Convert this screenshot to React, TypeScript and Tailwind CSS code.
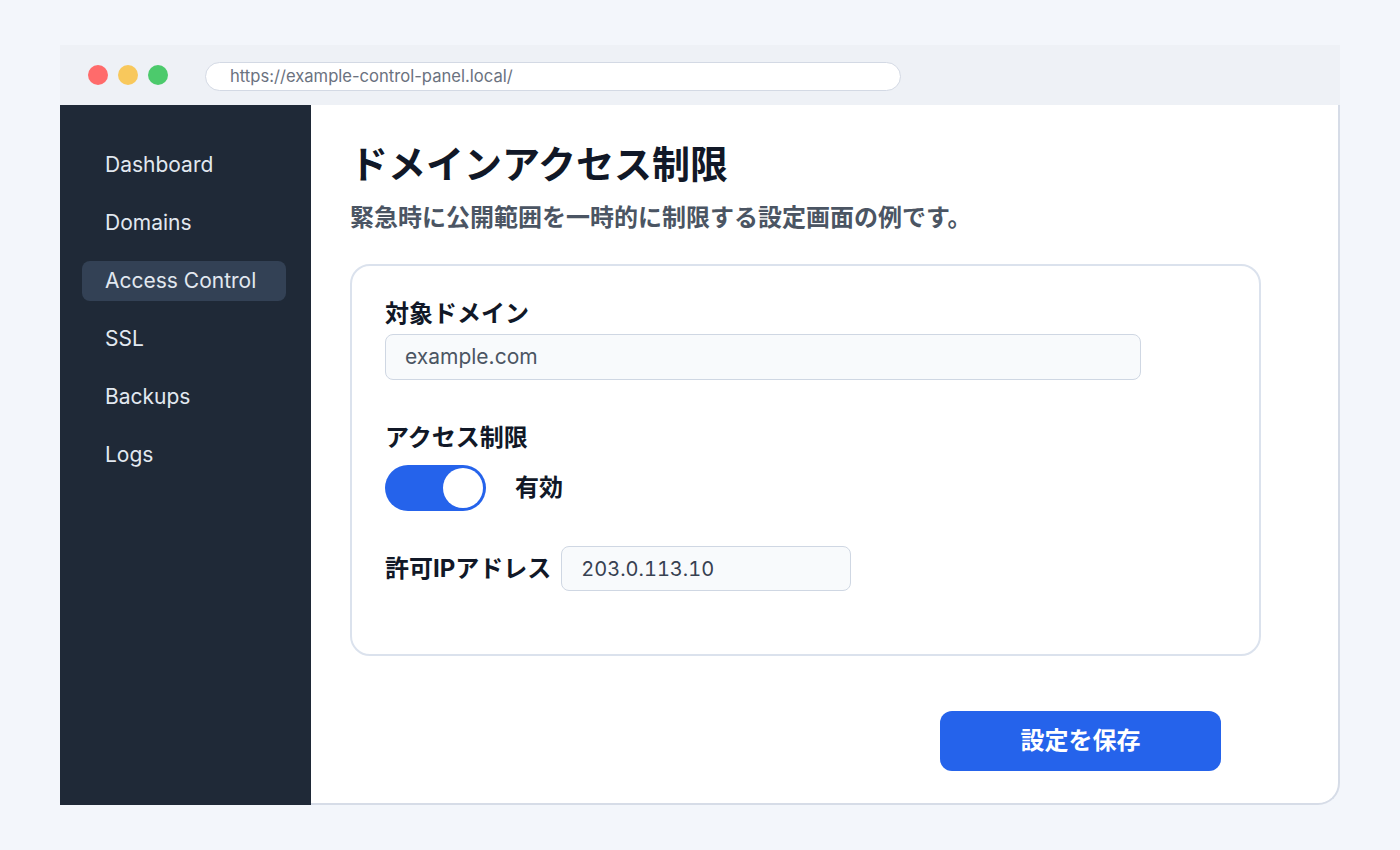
import { useState } from 'react';

const navItems = ['Dashboard', 'Domains', 'Access Control', 'SSL', 'Backups', 'Logs'];

function App() {
  const [enabled, setEnabled] = useState(true);

  return (
    <div
      className="min-h-screen w-full bg-[#f3f6fb] pt-[45px] pl-[60px]"
      style={{ fontFamily: 'Inter, "Noto Sans CJK JP", sans-serif' }}
    >
      <div className="flex h-[760px] w-[1280px] flex-col">
        {/* browser chrome */}
        <div className="flex h-[60px] shrink-0 items-center bg-[#eef1f6] pl-[28px]">
          <div className="flex gap-[10px]">
            <span className="h-[20px] w-[20px] rounded-full bg-[#ff6b6b]" />
            <span className="h-[20px] w-[20px] rounded-full bg-[#f8c85c]" />
            <span className="h-[20px] w-[20px] rounded-full bg-[#4cca6c]" />
          </div>
          <div className="mt-[2px] ml-[37px] flex h-[29px] w-[696px] items-center rounded-full border border-[#d3d9e4] bg-white pl-[24px] text-[16.6px] text-[#6b7280]">
            https://example-control-panel.local/
          </div>
        </div>

        <div className="flex flex-1">
          {/* sidebar */}
          <nav className="flex w-[251px] shrink-0 flex-col gap-[18px] bg-[#1f2937] pt-[40px] pr-[25px] pl-[22px]">
            {navItems.map((item) => (
              <div
                key={item}
                className={
                  'flex h-[40px] items-center rounded-[8px] pl-[23px] text-[21px] text-[#e2e8f0] ' +
                  (item === 'Access Control' ? 'bg-[#334155]' : '')
                }
              >
                {item}
              </div>
            ))}
          </nav>

          {/* main */}
          <main className="flex flex-1 flex-col rounded-br-[22px] border-r-2 border-b-2 border-[#d6dce7] bg-white pt-[31px] pl-[39px]">
            <h1 className="text-[38px] leading-[56px] font-bold text-[#111827]">ドメインアクセス制限</h1>
            <p className="mt-[10px] text-[24px] leading-[32px] font-semibold text-[#4b5563]">
              緊急時に公開範囲を一時的に制限する設定画面の例です。
            </p>

            <div className="mt-[30px] h-[392px] w-[911px] rounded-[20px] border-2 border-[#dbe2ed] px-[33px] pt-[33px]">
              <label className="block text-[24px] leading-[30px] font-bold text-[#111827]">対象ドメイン</label>
              <div className="mt-[5px] flex h-[46px] w-[756px] items-center rounded-[8px] border border-[#cfd7e3] bg-[#f8fafc] pl-[19px] text-[21px] text-[#4b5563]">
                example.com
              </div>

              <label className="mt-[43px] block text-[24px] leading-[30px] font-bold text-[#111827]">アクセス制限</label>
              <div className="mt-[12px] flex items-center">
                <button
                  type="button"
                  onClick={() => setEnabled(!enabled)}
                  className={
                    'flex h-[46px] w-[101px] items-center rounded-full p-[3px] ' +
                    (enabled ? 'justify-end bg-[#2563eb]' : 'justify-start bg-[#cbd5e1]')
                  }
                >
                  <span className="h-[40px] w-[40px] rounded-full bg-white" />
                </button>
                <span className="ml-[29px] text-[24px] font-semibold text-[#111827]">{enabled ? '有効' : '無効'}</span>
              </div>

              <div className="mt-[35px] flex items-center">
                <label className="text-[24px] font-bold text-[#111827]">許可IPアドレス</label>
                <div className="ml-[10px] flex h-[45px] w-[290px] items-center rounded-[8px] border border-[#cfd7e3] bg-[#f8fafc] pl-[19px] text-[20px] text-[#374151] tabular-nums">
                  203.0.113.10
                </div>
              </div>
            </div>

            <div className="mt-[55px] flex w-[871px] justify-end">
              <button
                type="button"
                className="h-[60px] w-[281px] rounded-[12px] bg-[#2563eb] text-[24px] font-bold text-white"
              >
                設定を保存
              </button>
            </div>
          </main>
        </div>
      </div>
    </div>
  );
}

export default App;
